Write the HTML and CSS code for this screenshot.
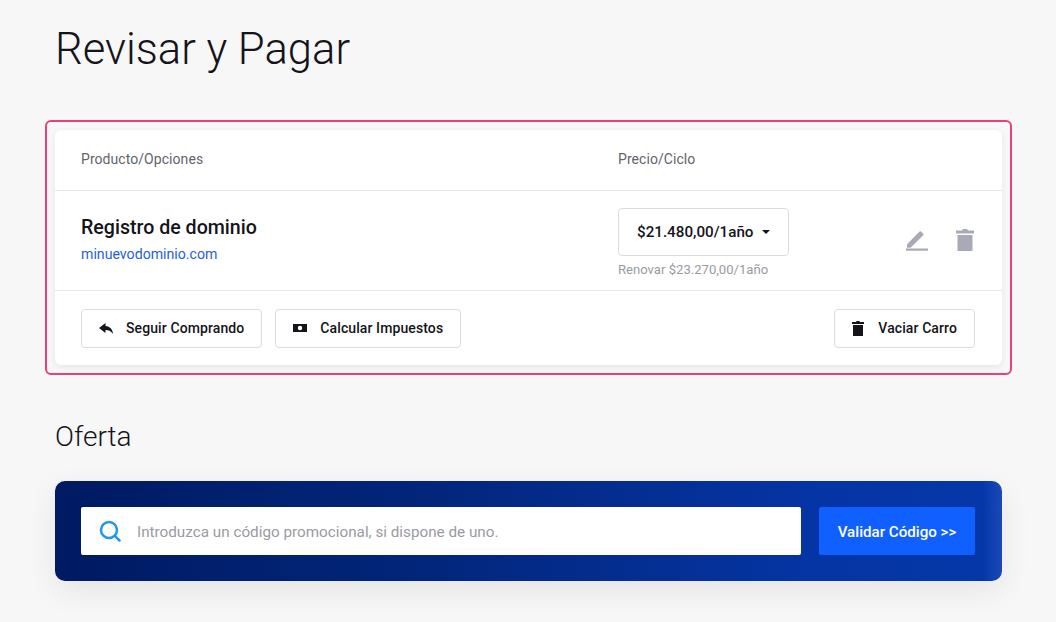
FILE: index.html
```html
<!DOCTYPE html>
<html lang="es">
<head>
    <meta charset="utf-8">
    <title>Revisar y Pagar</title>
    <link rel="stylesheet" href="styles.css">
</head>
<body>
    <main class="page">
        <h1 class="page-title">Revisar y Pagar</h1>

        <div class="highlight">
            <section class="cart">
                <div class="cart-head">
                    <div class="col-product">Producto/Opciones</div>
                    <div class="col-price">Precio/Ciclo</div>
                </div>

                <div class="cart-row">
                    <div class="col-product">
                        <div class="product-name">Registro de dominio</div>
                        <a class="product-domain" href="#">minuevodominio.com</a>
                    </div>
                    <div class="col-price">
                        <button class="price-select" type="button">$21.480,00/1año<span class="caret"></span></button>
                        <div class="renew">Renovar $23.270,00/1año</div>
                    </div>
                    <div class="row-actions">
                        <svg class="icon-edit" viewBox="0 0 22 22" width="22" height="22"><path d="M1 15.2 13.6 2.6a1 1 0 0 1 1.4 0l2.2 2.2a1 1 0 0 1 0 1.4L4.600 18.800H1z"/><rect x="0" y="19.500" width="22" height="2.200"/></svg>
                        <svg class="icon-trash" viewBox="0 0 18 22" width="18" height="22"><path d="M6 1.500 7 0h4l1 1.500h6v3H0v-3zM1.500 6h15v16h-15z"/></svg>
                    </div>
                </div>

                <div class="cart-foot">
                    <a class="btn" href="#">
                        <svg viewBox="0 0 14 11" width="14" height="11"><path d="M6.500 0 0 5l6.500 5V7c3 0 5.200.8 7.500 4C13.500 6 11 3.400 6.500 3z"/></svg>
                        Seguir Comprando
                    </a>
                    <a class="btn" href="#">
                        <svg viewBox="0 0 14 10" width="14" height="10"><path fill-rule="evenodd" d="M0 1h14v8H0zM7 2.800a2.200 2.200 0 1 0 0 4.400 2.200 2.200 0 0 0 0-4.400z"/></svg>
                        Calcular Impuestos
                    </a>
                    <a class="btn btn-empty" href="#">
                        <svg viewBox="0 0 12 15" width="12" height="15"><path d="M4 1 4.700 0h2.600L8 1h4v2H0V1zM1 4h10v11H1z"/></svg>
                        Vaciar Carro
                    </a>
                </div>
            </section>
        </div>

        <h2 class="section-title">Oferta</h2>

        <section class="promo">
            <div class="promo-input">
                <svg viewBox="0 0 22 22" width="22" height="22"><circle cx="10" cy="10" r="8" /><path d="m15.800 15.800 4.700 4.700"/></svg>
                <span class="promo-text">Introduzca un código promocional, si dispone de uno.</span>
            </div>
            <a class="promo-btn" href="#">Validar Código &gt;&gt;</a>
        </section>
    </main>
</body>
</html>
```

FILE: styles.css
```css
html, body {
    margin: 0;
    height: 100%;
    overflow: hidden;
}

body {
    background: #f7f7f7;
    color: #14141a;
    font-family: Roboto, "Liberation Sans", sans-serif;
    font-size: 14px;
}

a {
    text-decoration: none;
}

.page {
    padding: 0 54px 0 55px;
}

.page-title {
    margin: 0;
    padding-top: 24px;
    font-size: 43.600px;
    font-weight: 300;
    line-height: 52px;
    height: 96px;
}

.highlight {
    margin: 0 -10px;
    padding: 8px;
    border: 2px solid #e8407a;
    border-radius: 6px;
}

.cart {
    background: #fff;
    border-radius: 6px;
    box-shadow: 0 2px 6px rgba(0, 0, 0, 0.07);
}

.cart-head,
.cart-row {
    display: flex;
    padding: 0 26px;
    border-bottom: 1px solid #e8e8ea;
}

.cart-head {
    height: 58px;
    padding-bottom: 2px;
    align-items: center;
    color: #63636c;
    letter-spacing: 0.06px;
}

.cart-row {
    height: 99px;
    align-items: flex-start;
}

.col-product {
    width: 537px;
    flex: none;
}

.cart-row .col-product {
    padding-top: 25px;
}

.product-name {
    font-size: 19.600px;
    font-weight: 500;
    line-height: 24px;
}

.product-domain {
    display: block;
    margin-top: 4px;
    color: #1f5fd8;
    font-size: 14.150px;
    line-height: 20px;
}

.cart-row .col-price {
    padding-top: 17px;
}

.price-select {
    display: flex;
    align-items: center;
    width: 171px;
    height: 48px;
    padding: 0 0 0 18px;
    background: #fff;
    border: 1px solid #dcdcdf;
    border-radius: 4px;
    color: #14141a;
    font: 500 15.200px Roboto, "Liberation Sans", sans-serif;
}

.caret {
    margin-left: 8px;
    border-top: 4px solid #14141a;
    border-left: 4px solid transparent;
    border-right: 4px solid transparent;
}

.renew {
    margin-top: 5px;
    color: #9a9aa2;
    font-size: 13.100px;
    line-height: 18px;
}

.row-actions {
    margin-left: auto;
    display: flex;
    gap: 28px;
    padding: 38px 2px 0 0;
    fill: #a9a9b8;
}

.cart-foot {
    display: flex;
    gap: 13px;
    padding: 18px 27px 17px 26px;
}

.btn {
    display: flex;
    align-items: center;
    gap: 13px;
    height: 36px;
    padding: 0 17px 1px 17px;
    background: #fff;
    border: 1px solid #dcdcdf;
    border-radius: 4px;
    color: #14141a;
    fill: #14141a;
    font-size: 14px;
    font-weight: 500;
    letter-spacing: 0.1px;
}

.btn-empty {
    margin-left: auto;
    gap: 14px;
}

.section-title {
    margin: 44px 0 0;
    font-size: 28px;
    font-weight: 300;
    line-height: 36px;
    height: 62px;
}

.promo {
    display: flex;
    gap: 18px;
    height: 100px;
    padding: 26px 27px 26px 26px;
    box-sizing: border-box;
    background: linear-gradient(90deg, #001a62 0%, #02267c 40%, #0535a4 80%, #0637a8 98%, #1c49b8 100%);
    border-radius: 10px;
    box-shadow: 0 10px 30px rgba(0, 0, 0, 0.08);
}

.promo-input {
    flex: 1;
    display: flex;
    align-items: center;
    gap: 16px;
    padding-left: 18px;
    background: #fff;
    border-radius: 2px;
    color: #9a9aa2;
    font-size: 15.250px;
}

.promo-text {
    padding-top: 2px;
}

.promo-input svg {
    fill: none;
    stroke: #2196ee;
    stroke-width: 2.500;
    stroke-linecap: round;
}

.promo-btn {
    display: flex;
    align-items: center;
    justify-content: center;
    width: 156px;
    padding-top: 2px;
    box-sizing: border-box;
    background: #1060ff;
    border-radius: 2px;
    color: #fff;
    font-size: 15.150px;
    font-weight: 500;
}
```
